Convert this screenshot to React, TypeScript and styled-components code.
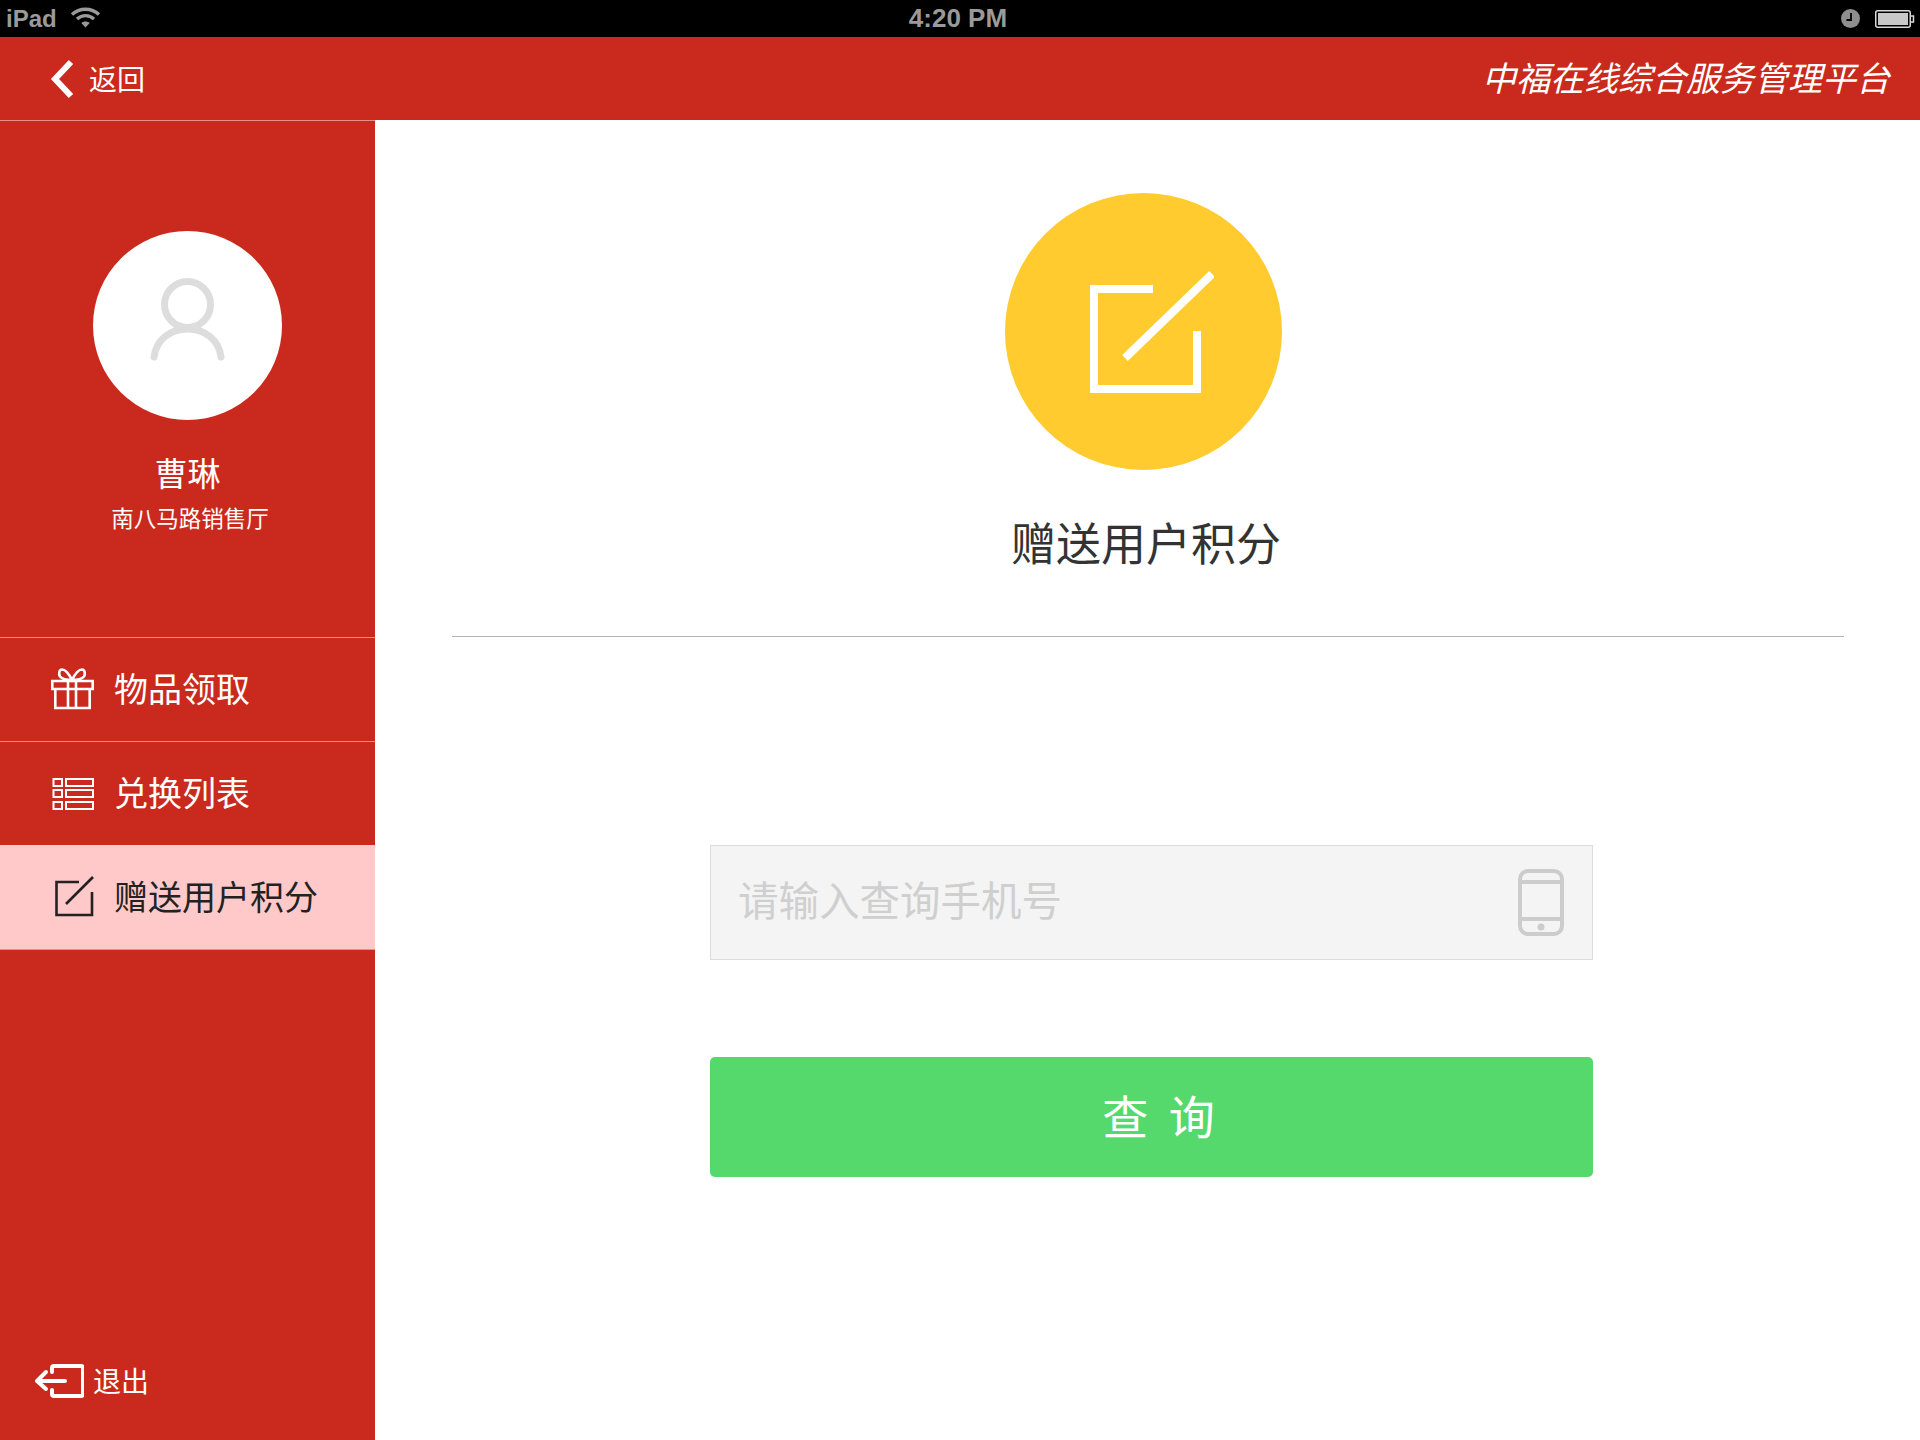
import React, { FunctionComponent } from 'react';
import styled, { createGlobalStyle } from 'styled-components';

const RED = '#CA2A1D';

const GiftIcon = () => (
  <svg width="44" height="44" viewBox="0 0 44 44" fill="none" stroke="#fff" strokeWidth="2.6">
    <path d="M2.3 13H42.7V21H2.3Z" />
    <path d="M5.3 21V40H39.7V21" />
    <path d="M18 13V40M26 13V40" />
    <path d="M22 12C19 6 15 1.5 12 1.5C9 1.5 8.5 6 10 8.5C12 11 17 12 22 12C27 12 32 11 34 8.5C35.5 6 35 1.5 32 1.5C29 1.5 25 6 22 12Z" />
  </svg>
);

const ListIcon = () => (
  <svg width="44" height="44" viewBox="0 0 44 44" fill="none" stroke="#fff" strokeWidth="2">
    <path d="M3.5 7H12V14H3.5ZM3.5 18H12V25H3.5ZM3.5 30H12V37H3.5Z" />
    <path d="M16 7H43V14H16ZM16 18H43V25H16ZM16 30H43V37H16Z" />
  </svg>
);

const EditIcon = () => (
  <svg width="44" height="44" viewBox="0 0 44 44" fill="none" stroke="#222" strokeWidth="2.6">
    <path d="M29 6H6.5V39H42V16" />
    <path d="M16 28L43 1" />
  </svg>
);

const BigEditIcon = () => (
  <svg width="124" height="122" viewBox="0 0 124 122" fill="none" stroke="#fff" strokeWidth="8">
    <path d="M63 18H4V118H107V60" />
    <path d="M35 87L122 3" />
  </svg>
);

let App: FunctionComponent = () => {
  return (
    <Page>
      <GlobalStyle />
      <StatusBar>
        <StatusLeft>
          iPad
          <svg width="31" height="21" viewBox="0 0 30 21" fill="none" stroke="#9a9a9a" strokeWidth="3.4">
            <path d="M1.5 7.5C9 0.5 21 0.5 28.5 7.5" />
            <path d="M6.5 12C11.5 7.5 18.5 7.5 23.5 12" />
            <path d="M15 20.5L10.8 16C13 14 17 14 19.2 16Z" fill="#9a9a9a" stroke="none" />
          </svg>
        </StatusLeft>
        <StatusTime>4:20 PM</StatusTime>
        <StatusRight>
          <svg width="19" height="19" viewBox="0 0 19 19">
            <circle cx="9.5" cy="9.5" r="9.5" fill="#8f8f8f" />
            <path d="M10 4V11H5.5" fill="none" stroke="#000" strokeWidth="1.8" />
          </svg>
          <svg width="40" height="18" viewBox="0 0 40 18">
            <rect x="0.75" y="0.75" width="34.5" height="16.5" rx="2" fill="none" stroke="#d8d8d8" strokeWidth="1.5" />
            <rect x="3" y="3" width="30" height="12" fill="#c8c8c8" />
            <path d="M36 6H38.5V12H36" fill="none" stroke="#d8d8d8" strokeWidth="1.5" />
          </svg>
        </StatusRight>
      </StatusBar>

      <Header>
        <BackLink>
          <svg width="24" height="40" viewBox="0 0 24 40" fill="none" stroke="#fff" strokeWidth="6">
            <path d="M21 3L5 20L21 37" />
          </svg>
          <BackLabel>返回</BackLabel>
        </BackLink>
        <HeaderTitle>中福在线综合服务管理平台</HeaderTitle>
      </Header>

      <Body>
        <Sidebar>
          <Profile>
            <Avatar>
              <svg width="75" height="84" viewBox="0 0 75 84" fill="none" stroke="#ddd" strokeWidth="7" strokeLinecap="round">
                <circle cx="37.5" cy="26.5" r="23" />
                <path d="M4 79C6 62 20 51 37.5 51C55 51 69 62 71 79" />
              </svg>
            </Avatar>
            <UserName>曹琳</UserName>
            <UserShop>南八马路销售厅</UserShop>
          </Profile>

          <NavItem>
            <GiftIcon />
            <NavLabel>物品领取</NavLabel>
          </NavItem>
          <NavItem>
            <ListIcon />
            <NavLabel>兑换列表</NavLabel>
          </NavItem>
          <NavItem active>
            <EditIcon />
            <NavLabel>赠送用户积分</NavLabel>
          </NavItem>
          <NavEnd />

          <Logout>
            <svg width="50" height="34" viewBox="0 0 50 34" fill="none" stroke="#fff" strokeWidth="4" strokeLinecap="round" strokeLinejoin="round">
              <path d="M18 8V4C18 2.8 18.8 2 20 2H47C48.2 2 49 2.8 49 4V30C49 31.2 48.2 32 47 32H20C18.8 32 18 31.2 18 30V26" />
              <path d="M31 17H3M12 8L3 17L12 25" />
            </svg>
            <LogoutLabel>退出</LogoutLabel>
          </Logout>
        </Sidebar>

        <Main>
          <Badge>
            <BigEditIcon />
          </Badge>
          <Title>赠送用户积分</Title>
          <Rule />
          <Form>
            <PhoneBox>
              <PhoneInput placeholder="请输入查询手机号" />
              <svg width="46" height="67" viewBox="0 0 46 67" fill="none" stroke="#ccc" strokeWidth="4">
                <rect x="2" y="2" width="42" height="63" rx="8" />
                <path d="M2 13H44M2 50H44" />
                <circle cx="23" cy="58" r="3.5" fill="#ccc" stroke="none" />
              </svg>
            </PhoneBox>
            <QueryButton>查 询</QueryButton>
          </Form>
        </Main>
      </Body>
    </Page>
  );
};

export default App;

const GlobalStyle = createGlobalStyle`
  html, body {
    margin: 0;
    padding: 0;
    background: #fff;
  }
  * {
    box-sizing: border-box;
  }
`;

const Page = styled.div`
  display: flex;
  flex-flow: column;
  width: 1920px;
  height: 1440px;
  overflow: hidden;
  font-family: "Noto Sans CJK SC", "Liberation Sans", sans-serif;
`;

const StatusBar = styled.div`
  display: grid;
  grid-template-columns: 1fr auto 1fr;
  align-items: center;
  height: 37px;
  background-color: #000;
  color: #9a9a9a;
  font-family: "Liberation Sans", Arial, sans-serif;
  padding: 0 5px 0 6px;
`;
const StatusLeft = styled.div`
  display: flex;
  align-items: center;
  gap: 13px;
  font-size: 24px;
  font-weight: 700;
  svg {
    margin-top: -2px;
  }
`;
const StatusTime = styled.div`
  font-size: 26px;
  font-weight: 700;
  margin-right: 5px;
`;
const StatusRight = styled.div`
  display: flex;
  justify-content: flex-end;
  align-items: center;
  gap: 15px;
`;

const Header = styled.header`
  display: flex;
  justify-content: space-between;
  align-items: center;
  height: 83px;
  flex: none;
  background-color: ${RED};
  color: #fff;
  padding: 0 30px 0 50px;
`;
const BackLink = styled.div`
  display: flex;
  align-items: center;
  gap: 15px;
  font-size: 28px;
`;
const BackLabel = styled.span`
  padding-bottom: 2px;
`;
const HeaderTitle = styled.div`
  font-size: 34px;
  font-style: italic;
  font-weight: 400;
  padding-bottom: 5px;
`;

const Body = styled.div`
  display: flex;
  flex: 1;
  min-height: 0;
`;

const Sidebar = styled.aside`
  display: flex;
  flex-flow: column;
  width: 375px;
  flex: none;
  background-color: ${RED};
  border-top: 1px solid #e39089;
  color: #fff;
`;
const Profile = styled.div`
  display: flex;
  flex-flow: column;
  align-items: center;
  height: 516px;
  padding-top: 110px;
`;
const Avatar = styled.div`
  display: flex;
  align-items: center;
  justify-content: center;
  width: 189px;
  height: 189px;
  border-radius: 50%;
  background-color: #fff;
  padding-bottom: 12px;
`;
const UserName = styled.div`
  font-size: 33px;
  line-height: 48px;
  margin-top: 28px;
`;
const UserShop = styled.div`
  font-size: 22.5px;
  line-height: 32px;
  margin: 5px 0 0 5px;
`;

const NavItem = styled.div<{ active?: boolean }>`
  display: flex;
  align-items: center;
  gap: 20px;
  height: 104px;
  flex: none;
  padding-left: 50px;
  border-top: 1px solid ${({ active }) => (active ? '#FFC9C9' : '#e39089')};
  background-color: ${({ active }) => (active ? '#FFC9C9' : 'transparent')};
  color: ${({ active }) => (active ? '#222' : '#fff')};
  font-size: 34px;
`;
const NavLabel = styled.span`
  padding-bottom: 5px;
`;
const NavEnd = styled.div`
  height: 1px;
  flex: none;
  background-color: #e39089;
`;
const Logout = styled.div`
  display: flex;
  align-items: center;
  gap: 9px;
  margin-top: auto;
  padding: 0 0 39px 34px;
  font-size: 28px;
`;
const LogoutLabel = styled.span`
  padding-bottom: 1px;
`;

const Main = styled.main`
  display: flex;
  flex-flow: column;
  flex: 1;
  align-items: center;
  padding: 73px 76px 0 77px;
  background-color: #fff;
`;
const Badge = styled.div`
  display: flex;
  align-items: center;
  justify-content: center;
  width: 277px;
  height: 277px;
  border-radius: 50%;
  background-color: #FFCB2F;
  margin-right: 9px;
  padding-left: 16px;
`;
const Title = styled.h1`
  margin: 39px 4px 0 0;
  font-size: 45px;
  font-weight: 400;
  line-height: 66px;
  color: #333;
`;
const Rule = styled.div`
  width: 100%;
  height: 1px;
  flex: none;
  margin-top: 61px;
  background-color: #b5b5b5;
`;
const Form = styled.div`
  display: flex;
  flex-flow: column;
  width: 883px;
  margin: 208px 0 0 7px;
  gap: 97px;
`;
const PhoneBox = styled.div`
  display: flex;
  align-items: center;
  height: 115px;
  padding: 0 28px 0 27px;
  background-color: #F4F4F4;
  border: 1px solid #DCDCDC;
`;
const PhoneInput = styled.input`
  flex: 1;
  min-width: 0;
  border: none;
  outline: none;
  padding: 0 0 8px;
  background: transparent;
  font-family: "Noto Sans CJK SC", sans-serif;
  font-size: 40.5px;
  color: #333;
  &::placeholder {
    color: #cfcfcf;
    opacity: 1;
  }
`;
const QueryButton = styled.button`
  height: 120px;
  border: none;
  border-radius: 5px;
  background-color: #55D96D;
  color: #fff;
  font-family: "Noto Sans CJK SC", sans-serif;
  font-size: 46px;
  letter-spacing: 5px;
  padding: 0 0 7px 19px;
`;
